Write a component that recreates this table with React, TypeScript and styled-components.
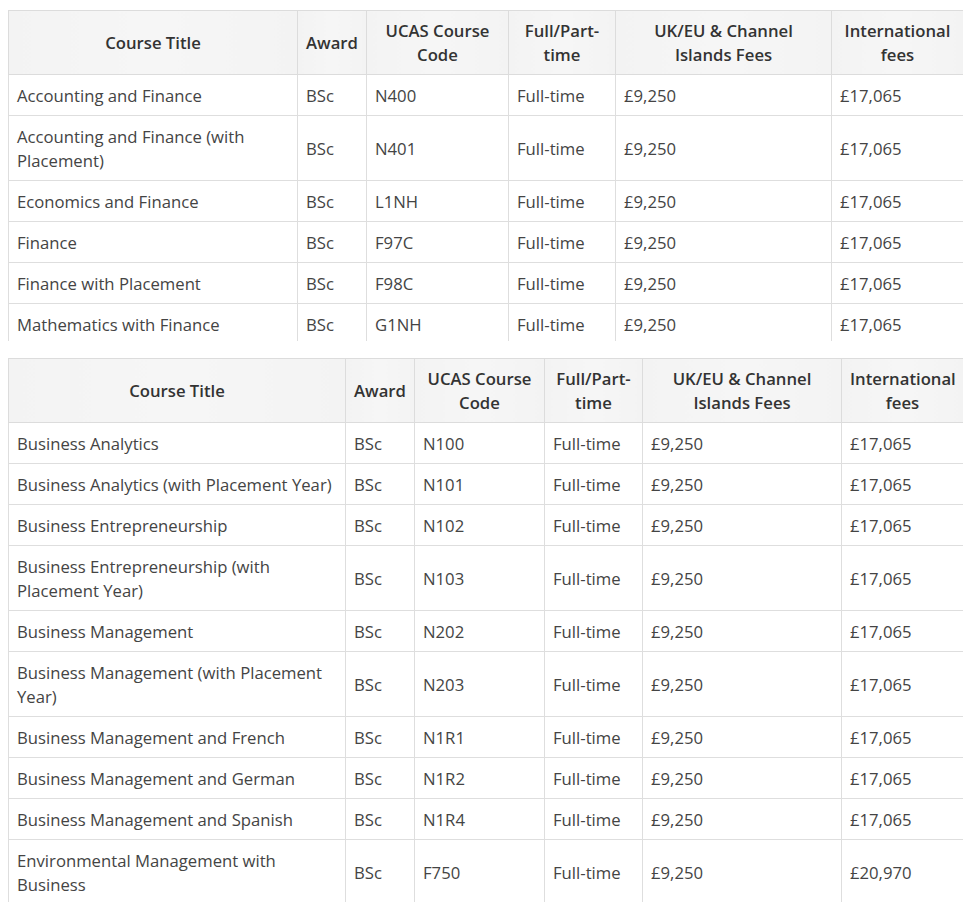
import React from 'react'
import styled, { createGlobalStyle } from 'styled-components'

const GlobalStyle = createGlobalStyle`
  html, body {
    margin: 0;
    padding: 0;
    background: #fff;
  }
  body {
    font-family: "Open Sans", "Noto Sans", "Liberation Sans", sans-serif;
    color: #444;
  }
`

const Page = styled.div`
  display: flex;
  flex-direction: column;
  gap: 17px;
  padding: 10px 13px 0 8px;
`

const Clip = styled.div<{ $h: number }>`
  height: ${p => p.$h}px;
  overflow: hidden;
`

const Table = styled.table`
  width: 100%;
  border-collapse: collapse;
  table-layout: fixed;
  font-size: 16.7px;
  line-height: 24px;
`

const Th = styled.th`
  background: linear-gradient(90deg, #f3f3f3 0%, #f6f6f6 50%, #f3f3f3 100%);
  color: #333;
  font-weight: 600;
  text-align: center;
  vertical-align: middle;
  padding: 8px 8px 7px;
  border: 1px solid #dcdcdc;
  white-space: pre-line;
`

const Td = styled.td`
  text-align: left;
  vertical-align: middle;
  padding: 9px 8px 7px;
  border: 1px solid #dedede;
  color: #444;
`

type Row = [string, string, string, string, string, string]

const heads = ['Course Title', 'Award', 'UCAS Course\nCode', 'Full/Part-\ntime', 'UK/EU & Channel\nIslands Fees', 'International\nfees']

const first: Row[] = [
  ['Accounting and Finance', 'BSc', 'N400', 'Full-time', '£9,250', '£17,065'],
  ['Accounting and Finance (with Placement)', 'BSc', 'N401', 'Full-time', '£9,250', '£17,065'],
  ['Economics and Finance', 'BSc', 'L1NH', 'Full-time', '£9,250', '£17,065'],
  ['Finance', 'BSc', 'F97C', 'Full-time', '£9,250', '£17,065'],
  ['Finance with Placement', 'BSc', 'F98C', 'Full-time', '£9,250', '£17,065'],
  ['Mathematics with Finance', 'BSc', 'G1NH', 'Full-time', '£9,250', '£17,065'],
]

const second: Row[] = [
  ['Business Analytics', 'BSc', 'N100', 'Full-time', '£9,250', '£17,065'],
  ['Business Analytics (with Placement Year)', 'BSc', 'N101', 'Full-time', '£9,250', '£17,065'],
  ['Business Entrepreneurship', 'BSc', 'N102', 'Full-time', '£9,250', '£17,065'],
  ['Business Entrepreneurship (with Placement Year)', 'BSc', 'N103', 'Full-time', '£9,250', '£17,065'],
  ['Business Management', 'BSc', 'N202', 'Full-time', '£9,250', '£17,065'],
  ['Business Management (with Placement Year)', 'BSc', 'N203', 'Full-time', '£9,250', '£17,065'],
  ['Business Management and French', 'BSc', 'N1R1', 'Full-time', '£9,250', '£17,065'],
  ['Business Management and German', 'BSc', 'N1R2', 'Full-time', '£9,250', '£17,065'],
  ['Business Management and Spanish', 'BSc', 'N1R4', 'Full-time', '£9,250', '£17,065'],
  ['Environmental Management with Business', 'BSc', 'F750', 'Full-time', '£9,250', '£20,970'],
]

const FeeTable = ({ cols, rows, height }: { cols: number[]; rows: Row[]; height: number }) => (
  <Clip $h={height}>
    <Table>
      <colgroup>
        {cols.map((w, i) => <col key={i} style={{ width: w }} />)}
      </colgroup>
      <thead>
        <tr>
          {heads.map(h => <Th key={h}>{h}</Th>)}
        </tr>
      </thead>
      <tbody>
        {rows.map(r => (
          <tr key={r[2]}>
            {r.map((c, i) => <Td key={i}>{c}</Td>)}
          </tr>
        ))}
      </tbody>
    </Table>
  </Clip>
)

export default function App() {
  return (
    <Page>
      <GlobalStyle />
      <FeeTable cols={[289, 69, 142, 107, 216, 132]} rows={first} height={331} />
      <FeeTable cols={[337, 69, 130, 98, 199, 122]} rows={second} height={544} />
    </Page>
  )
}
